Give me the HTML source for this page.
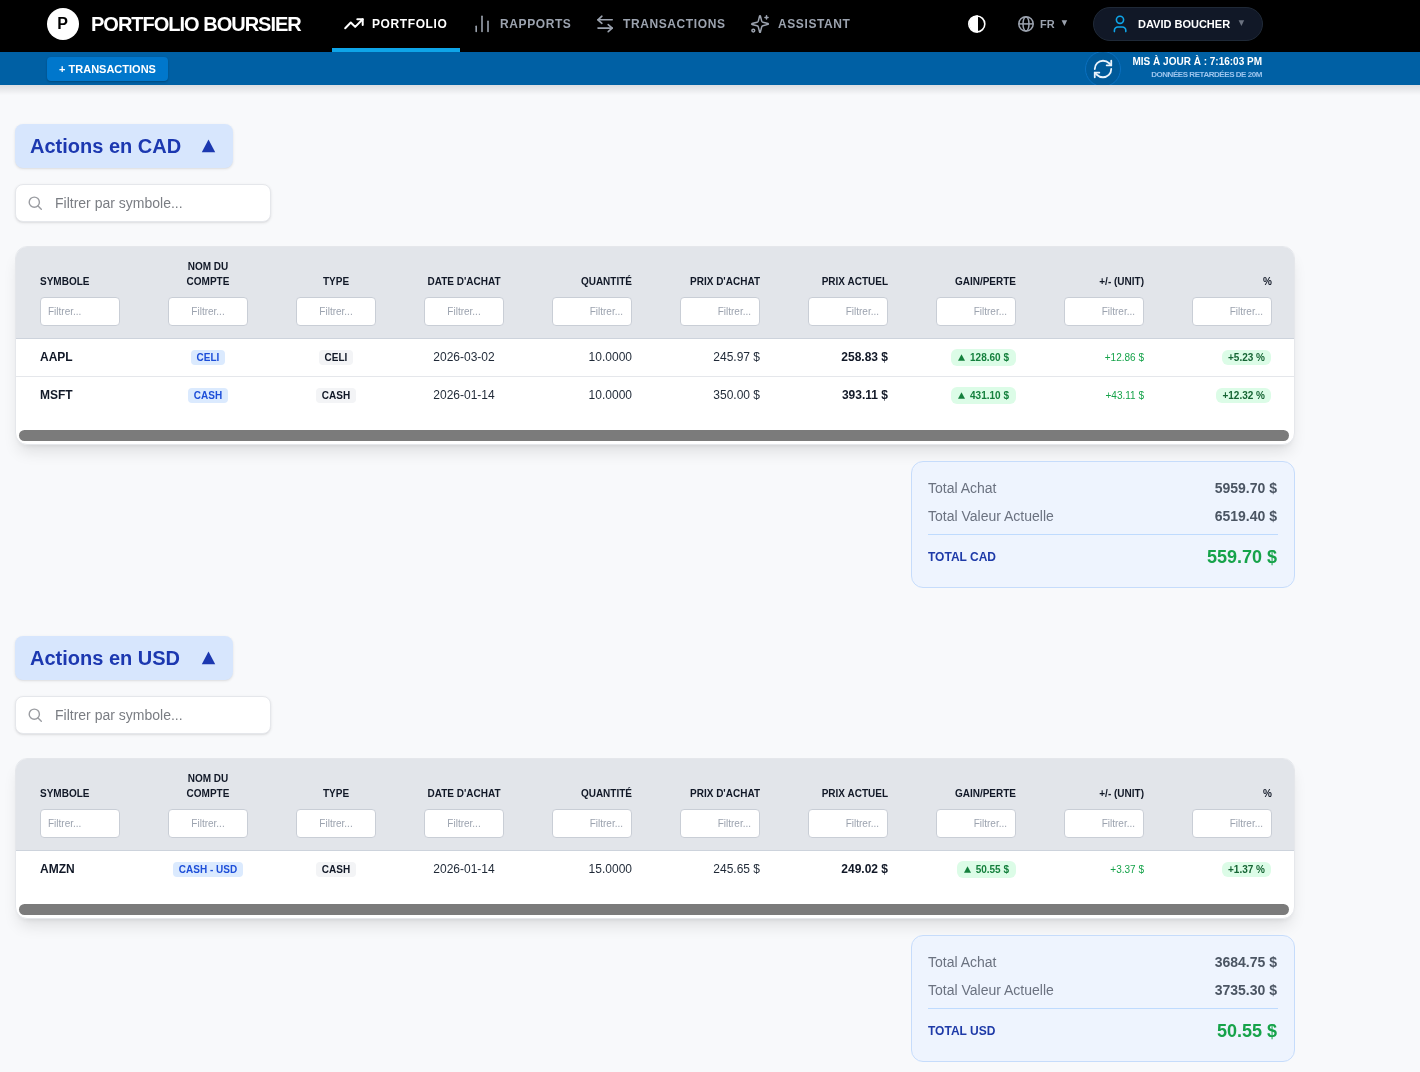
<!DOCTYPE html>
<html lang="fr">
<head>
<meta charset="utf-8">
<title>Portfolio Boursier</title>
<style>
*{box-sizing:border-box;margin:0;padding:0}
html,body{width:1420px;height:1072px;overflow:hidden}
body{position:relative;will-change:transform;background:#f8f9fb;font-family:"Liberation Sans",sans-serif;color:#111827}
.abs{position:absolute}
#nav{position:absolute;left:0;top:0;width:1420px;height:52px;background:#000}
#sub{position:absolute;left:0;top:52px;width:1420px;height:33px;background:#0060a4;overflow:hidden}
#subshadow{position:absolute;left:0;top:85px;width:1420px;height:10px;background:linear-gradient(#dcdde0,rgba(248,249,251,0))}
.logo{left:47px;top:8px;width:32px;height:32px;border-radius:50%;background:#fff;color:#000;font-weight:700;font-size:16px;line-height:32px;text-align:center;text-indent:-1px}
.title{left:91px;top:12px;font-size:20px;font-weight:700;color:#fff;letter-spacing:-1px;line-height:24px;white-space:nowrap}
.navt{top:17px;font-size:12px;font-weight:700;letter-spacing:0.6px;line-height:14px;white-space:nowrap;color:#9ca3af}
.navt.on{color:#fff}
.ul{left:332px;top:48px;width:128px;height:4px;background:#0ea5e9}
svg{position:absolute;overflow:visible}
.pill{left:1093px;top:7px;width:170px;height:34px;border-radius:17px;background:#111827;border:1px solid #1f2937}
.btn{left:47px;top:5px;width:121px;height:24px;border-radius:4px;background:#0077cc;box-shadow:0 1px 2px rgba(0,0,0,.25);color:#fff;font-size:11px;font-weight:700;line-height:24px;text-align:center;white-space:nowrap}

.sec-pill{left:15px;width:218px;height:44px;border-radius:8px;background:#d7e6fd;box-shadow:0 1px 3px 0 rgba(0,0,0,.1),0 1px 2px -1px rgba(0,0,0,.1)}
.sec-pill span{position:absolute;left:15px;top:10px;font-size:20px;font-weight:700;color:#1c38b0;line-height:24px;white-space:nowrap}
.search{left:15px;width:256px;height:38px;border-radius:8px;background:#fff;border:1px solid #e5e7eb;box-shadow:0 1px 3px 0 rgba(0,0,0,.1),0 1px 2px -1px rgba(0,0,0,.1)}
.search span{position:absolute;left:39px;top:9px;font-size:14px;line-height:18px;color:#7a7d83;white-space:nowrap}
.tbl{left:15px;width:1280px;border-radius:12px;background:#fff;border:1px solid #e5e7eb;box-shadow:0 10px 15px -3px rgba(0,0,0,.1),0 4px 6px -4px rgba(0,0,0,.1);overflow:hidden}
.thead{position:absolute;left:0;top:0;width:1280px;height:92px;background:#e2e5ea;border-bottom:1px solid #cdd3dc}
.th{position:absolute;top:0;width:128px;height:91px}
.th .lab{position:absolute;left:24px;width:80px;bottom:49px;font-size:10px;font-weight:700;line-height:15px;color:#111827;white-space:nowrap}
.th .inp{position:absolute;left:24px;top:50px;width:80px;height:29px;background:#fff;border:1px solid #c9ced6;border-radius:4px;font-size:10px;line-height:28px;color:#9ca3af;padding:0 8px}
.th .inp.l{padding-left:7px}
.c{text-align:center}.r{text-align:right}.l{text-align:left}
.row{position:absolute;left:0;width:1280px;height:38px;border-bottom:1px solid #e5e7eb}
.row.last{border-bottom:none}
.td{position:absolute;top:0;width:128px;height:37px;padding:0 24px;font-size:12px;line-height:37px;white-space:nowrap;color:#1f2937}
.b{font-weight:700;color:#111827}
.badge{display:inline-block;vertical-align:middle;font-size:10px;font-weight:700;line-height:15px;height:15px;padding:0 6px;border-radius:4px;position:relative;top:0}
.bb{background:#dbeafe;color:#1d4ed8}
.bg{background:#f3f4f6;color:#111827}
.gain{display:inline-block;vertical-align:middle;font-size:10px;font-weight:700;line-height:17px;height:17px;padding:0 7px 0 19px;border-radius:6px;background:#dcfce7;color:#15803d;position:relative;top:0}
.gain svg{left:7px;top:5px}
.pct{display:inline-block;vertical-align:middle;font-size:10px;font-weight:700;line-height:15px;height:15px;padding:0 6px;border-radius:6px;background:#dcfce7;color:#166534;position:relative;top:0;margin-right:1px}
.unit{font-size:10px;color:#16a34a}
.thumb{position:absolute;left:3px;height:11px;width:1270px;border-radius:6px;background:#7b7b7b}
.sum{left:911px;width:384px;height:127px;border-radius:12px;background:#eef4fe;border:1px solid #c6dcfb}
.sum .k{position:absolute;left:16px;font-size:14px;line-height:20px;color:#6b7280;white-space:nowrap}
.sum .v{position:absolute;right:17px;font-size:14px;line-height:20px;color:#4b5563;font-weight:700;white-space:nowrap}
.sum .div{position:absolute;left:16px;right:16px;top:72px;height:1px;background:#bfdbfe}
.sum .tk{position:absolute;left:16px;top:81px;font-size:12px;line-height:28px;font-weight:700;color:#1e3aa8}
.sum .tv{position:absolute;right:17px;top:81px;font-size:18px;line-height:28px;font-weight:700;color:#16a34a}
</style>
</head>
<body>

<div id="nav">
  <div class="abs logo">P</div>
  <div class="abs title">PORTFOLIO BOURSIER</div>

  <!-- trending up -->
  <svg style="left:0;top:0" width="1" height="1"><polyline points="345.2,28.2 350.8,22.5 355.2,26.9 362.7,19.3" fill="none" stroke="#fff" stroke-width="2" stroke-linecap="round" stroke-linejoin="round"/><polyline points="357.3,19.3 362.7,19.3 362.7,25.0" fill="none" stroke="#fff" stroke-width="2" stroke-linecap="round" stroke-linejoin="round"/></svg>
  <div class="abs navt on" style="left:372px">PORTFOLIO</div>
  <div class="abs ul"></div>

  <!-- bars -->
  <svg style="left:0;top:0" width="1" height="1"><g stroke="#9ca3af" stroke-width="1.6" stroke-linecap="round"><line x1="476.2" y1="26.3" x2="476.2" y2="31.5"/><line x1="482" y1="16.3" x2="482" y2="31.5"/><line x1="488" y1="21.3" x2="488" y2="31.5"/></g></svg>
  <div class="abs navt" style="left:500px">RAPPORTS</div>

  <!-- arrows -->
  <svg style="left:0;top:0" width="1" height="1"><g fill="none" stroke="#9ca3af" stroke-width="1.6" stroke-linecap="round" stroke-linejoin="round"><polyline points="601.9,16.2 597.9,19.8 601.9,23.3"/><line x1="597.9" y1="19.8" x2="612.2" y2="19.8"/><polyline points="608.2,24.6 612.2,28.1 608.2,31.6"/><line x1="598" y1="28.1" x2="612.2" y2="28.1"/></g></svg>
  <div class="abs navt" style="left:623px">TRANSACTIONS</div>

  <!-- sparkles -->
  <svg style="left:0;top:0" width="1" height="1"><g fill="none" stroke="#9ca3af" stroke-width="1.5" stroke-linecap="round" stroke-linejoin="round"><path transform="translate(750 14) scale(0.8333)" stroke-width="1.8" d="M9.937 15.5A2 2 0 0 0 8.5 14.063l-6.135-1.582a.5.5 0 0 1 0-.962L8.5 9.936A2 2 0 0 0 9.937 8.5l1.582-6.135a.5.5 0 0 1 .963 0L14.063 8.5A2 2 0 0 0 15.5 9.937l6.135 1.581a.5.5 0 0 1 0 .964L15.5 14.063a2 2 0 0 0-1.437 1.437l-1.582 6.135a.5.5 0 0 1-.963 0z"/><line x1="766.5" y1="15.75" x2="766.5" y2="19.05"/><line x1="764.95" y1="17.4" x2="768.05" y2="17.4"/><circle cx="753.3" cy="30.6" r="1.4"/></g></svg>
  <div class="abs navt" style="left:778px">ASSISTANT</div>

  <!-- theme -->
  <svg style="left:0;top:0" width="1" height="1"><circle cx="976.8" cy="24" r="8" fill="none" stroke="#fff" stroke-width="1.6"/><path d="M978,15.25 A8.75,8.75 0 0 0 978,32.75 Z" fill="#fff"/></svg>

  <!-- globe -->
  <svg style="left:0;top:0" width="1" height="1"><g fill="none" stroke="#9ca3af" stroke-width="1.5"><circle cx="1026" cy="23.9" r="7.2"/><ellipse cx="1026" cy="23.9" rx="3" ry="7.2"/><line x1="1018.8" y1="23.9" x2="1033.2" y2="23.9"/></g></svg>
  <div class="abs" style="left:1040px;top:18px;font-size:11px;font-weight:700;line-height:12px;color:#9ca3af">FR</div>
  <svg style="left:0;top:0" width="1" height="1"><path d="M1061.6,20.2 L1067.2,20.2 L1064.4,26 Z" fill="#9ca3af"/></svg>

  <div class="abs pill"></div>
  <svg style="left:0;top:0" width="1" height="1"><g fill="none" stroke="#0ea5e9" stroke-width="1.6" stroke-linecap="round"><circle cx="1120" cy="19.8" r="3.6"/><path d="M1114.4,31.6 V30.4 A3.4,3.4 0 0 1 1117.8,27 H1122.4 A3.4,3.4 0 0 1 1125.8,30.4 V31.6"/></g></svg>
  <div class="abs" style="left:1138px;top:17px;font-size:11px;font-weight:700;line-height:14px;color:#fff;white-space:nowrap">DAVID BOUCHER</div>
  <svg style="left:0;top:0" width="1" height="1"><path d="M1238.6,20.3 L1244.2,20.3 L1241.4,26 Z" fill="#6b7280"/></svg>
</div>

<div id="sub">
  <div class="abs btn">+ TRANSACTIONS</div>
  <div class="abs" style="left:1085px;top:-1.5px;width:36px;height:36px;border-radius:50%;background:#005a9a;border:1px solid #0a70c0"></div>
  <svg style="left:0;top:-52px" width="1" height="1"><g fill="none" stroke="#eaf3fb" stroke-width="1.8" stroke-linecap="round" stroke-linejoin="round"><path d="M1094.75,69 A8.25,8.25 0 0 1 1103,60.75 A8.9,8.9 0 0 1 1109.18,63.26 L1111.25,65.3"/><path d="M1111.25,60.75 V65.3 H1106.67"/><path d="M1111.25,69 A8.25,8.25 0 0 1 1103,77.25 A8.9,8.9 0 0 1 1096.82,74.74 L1094.75,72.7"/><path d="M1099.33,72.7 H1094.75 V77.25"/></g></svg>
  <div class="abs" style="right:158px;top:4px;font-size:10px;font-weight:700;line-height:12px;color:#fff;white-space:nowrap">MIS À JOUR À : 7:16:03 PM</div>
  <div class="abs" style="right:158px;top:18px;font-size:8px;font-weight:700;letter-spacing:-0.45px;line-height:10px;color:#9cc5ee;white-space:nowrap">DONNÉES RETARDÉES DE 20M</div>
</div>
<div id="subshadow"></div>

<!-- SECTIONS -->
<div id="s1"><div class="abs sec-pill" style="top:124px"><span>Actions en CAD</span><svg style="left:186px;top:15px" width="15" height="14"><path d="M7.5,0.6 L14.2,13.3 L0.8,13.3 Z" fill="#1c38b0"/></svg></div>
<div class="abs search" style="top:184px"><svg style="left:12px;top:11px" width="14" height="14"><g fill="none" stroke="#9a9ca1" stroke-width="1.4" stroke-linecap="round"><circle cx="6.3" cy="6.2" r="5.1"/><line x1="10" y1="9.9" x2="13.3" y2="13.2"/></g></svg><span>Filtrer par symbole...</span></div>
<div class="abs tbl" style="top:246px;height:199px">
<div class="thead">
<div class="th" style="left:0px"><div class="lab l">SYMBOLE</div><div class="inp l">Filtrer...</div></div>
<div class="th" style="left:128px"><div class="lab c">NOM DU<br>COMPTE</div><div class="inp c">Filtrer...</div></div>
<div class="th" style="left:256px"><div class="lab c">TYPE</div><div class="inp c">Filtrer...</div></div>
<div class="th" style="left:384px"><div class="lab c">DATE D'ACHAT</div><div class="inp c">Filtrer...</div></div>
<div class="th" style="left:512px"><div class="lab r">QUANTITÉ</div><div class="inp r">Filtrer...</div></div>
<div class="th" style="left:640px"><div class="lab r">PRIX D'ACHAT</div><div class="inp r">Filtrer...</div></div>
<div class="th" style="left:768px"><div class="lab r">PRIX ACTUEL</div><div class="inp r">Filtrer...</div></div>
<div class="th" style="left:896px"><div class="lab r">GAIN/PERTE</div><div class="inp r">Filtrer...</div></div>
<div class="th" style="left:1024px"><div class="lab r">+/- (UNIT)</div><div class="inp r">Filtrer...</div></div>
<div class="th" style="left:1152px"><div class="lab r">%</div><div class="inp r">Filtrer...</div></div>
</div>
<div class="row" style="top:92px">
<div class="td l" style="left:0px"><span class="b">AAPL</span></div>
<div class="td c" style="left:128px"><span class="badge bb">CELI</span></div>
<div class="td c" style="left:256px"><span class="badge bg">CELI</span></div>
<div class="td c" style="left:384px">2026-03-02</div>
<div class="td r" style="left:512px">10.0000</div>
<div class="td r" style="left:640px">245.97 $</div>
<div class="td r" style="left:768px"><span class="b">258.83 $</span></div>
<div class="td r" style="left:896px"><span class="gain"><svg width="7" height="7"><path d="M3.5,0.3 L7,6.8 L0,6.8 Z" fill="#15803d"/></svg>128.60 $</span></div>
<div class="td r" style="left:1024px"><span class="unit">+12.86 $</span></div>
<div class="td r" style="left:1152px"><span class="pct">+5.23 %</span></div>
</div>
<div class="row last" style="top:130px">
<div class="td l" style="left:0px"><span class="b">MSFT</span></div>
<div class="td c" style="left:128px"><span class="badge bb">CASH</span></div>
<div class="td c" style="left:256px"><span class="badge bg">CASH</span></div>
<div class="td c" style="left:384px">2026-01-14</div>
<div class="td r" style="left:512px">10.0000</div>
<div class="td r" style="left:640px">350.00 $</div>
<div class="td r" style="left:768px"><span class="b">393.11 $</span></div>
<div class="td r" style="left:896px"><span class="gain"><svg width="7" height="7"><path d="M3.5,0.3 L7,6.8 L0,6.8 Z" fill="#15803d"/></svg>431.10 $</span></div>
<div class="td r" style="left:1024px"><span class="unit">+43.11 $</span></div>
<div class="td r" style="left:1152px"><span class="pct">+12.32 %</span></div>
</div>
<div class="thumb" style="top:183px"></div>
</div>
<div class="abs sum" style="top:461px"><div class="k" style="top:16px">Total Achat</div><div class="v" style="top:16px">5959.70 $</div><div class="k" style="top:44px">Total Valeur Actuelle</div><div class="v" style="top:44px">6519.40 $</div><div class="div"></div><div class="tk">TOTAL CAD</div><div class="tv">559.70 $</div></div></div><!--e1-->
<div id="s2"><div class="abs sec-pill" style="top:636px"><span>Actions en USD</span><svg style="left:186px;top:15px" width="15" height="14"><path d="M7.5,0.6 L14.2,13.3 L0.8,13.3 Z" fill="#1c38b0"/></svg></div>
<div class="abs search" style="top:696px"><svg style="left:12px;top:11px" width="14" height="14"><g fill="none" stroke="#9a9ca1" stroke-width="1.4" stroke-linecap="round"><circle cx="6.3" cy="6.2" r="5.1"/><line x1="10" y1="9.9" x2="13.3" y2="13.2"/></g></svg><span>Filtrer par symbole...</span></div>
<div class="abs tbl" style="top:758px;height:161px">
<div class="thead">
<div class="th" style="left:0px"><div class="lab l">SYMBOLE</div><div class="inp l">Filtrer...</div></div>
<div class="th" style="left:128px"><div class="lab c">NOM DU<br>COMPTE</div><div class="inp c">Filtrer...</div></div>
<div class="th" style="left:256px"><div class="lab c">TYPE</div><div class="inp c">Filtrer...</div></div>
<div class="th" style="left:384px"><div class="lab c">DATE D'ACHAT</div><div class="inp c">Filtrer...</div></div>
<div class="th" style="left:512px"><div class="lab r">QUANTITÉ</div><div class="inp r">Filtrer...</div></div>
<div class="th" style="left:640px"><div class="lab r">PRIX D'ACHAT</div><div class="inp r">Filtrer...</div></div>
<div class="th" style="left:768px"><div class="lab r">PRIX ACTUEL</div><div class="inp r">Filtrer...</div></div>
<div class="th" style="left:896px"><div class="lab r">GAIN/PERTE</div><div class="inp r">Filtrer...</div></div>
<div class="th" style="left:1024px"><div class="lab r">+/- (UNIT)</div><div class="inp r">Filtrer...</div></div>
<div class="th" style="left:1152px"><div class="lab r">%</div><div class="inp r">Filtrer...</div></div>
</div>
<div class="row last" style="top:92px">
<div class="td l" style="left:0px"><span class="b">AMZN</span></div>
<div class="td c" style="left:128px"><span class="badge bb">CASH - USD</span></div>
<div class="td c" style="left:256px"><span class="badge bg">CASH</span></div>
<div class="td c" style="left:384px">2026-01-14</div>
<div class="td r" style="left:512px">15.0000</div>
<div class="td r" style="left:640px">245.65 $</div>
<div class="td r" style="left:768px"><span class="b">249.02 $</span></div>
<div class="td r" style="left:896px"><span class="gain"><svg width="7" height="7"><path d="M3.5,0.3 L7,6.8 L0,6.8 Z" fill="#15803d"/></svg>50.55 $</span></div>
<div class="td r" style="left:1024px"><span class="unit">+3.37 $</span></div>
<div class="td r" style="left:1152px"><span class="pct">+1.37 %</span></div>
</div>
<div class="thumb" style="top:145px"></div>
</div>
<div class="abs sum" style="top:935px"><div class="k" style="top:16px">Total Achat</div><div class="v" style="top:16px">3684.75 $</div><div class="k" style="top:44px">Total Valeur Actuelle</div><div class="v" style="top:44px">3735.30 $</div><div class="div"></div><div class="tk">TOTAL USD</div><div class="tv">50.55 $</div></div></div><!--e2-->

</body>
</html>
